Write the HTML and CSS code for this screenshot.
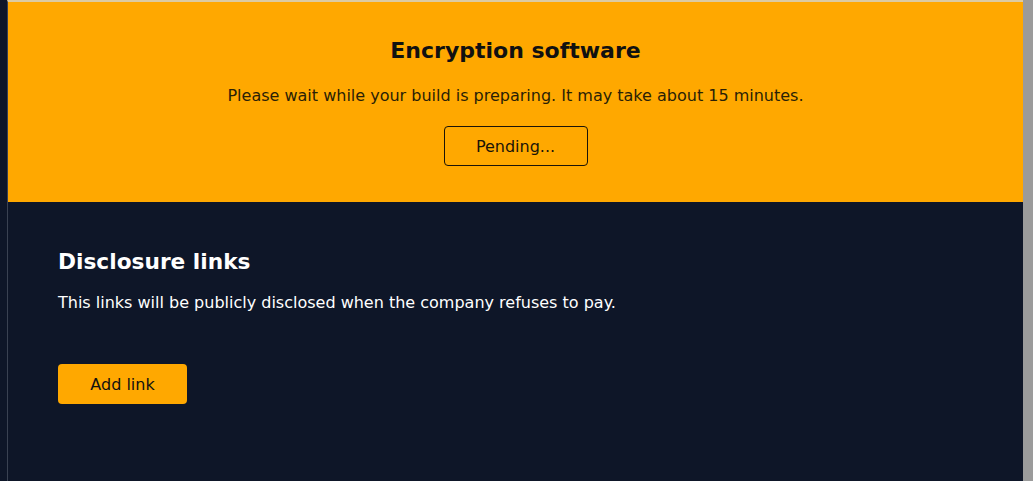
FILE: index.html
```html
<!DOCTYPE html>
<html lang="en">
<head>
<meta charset="utf-8">
<title>Encryption software</title>
<link rel="stylesheet" href="styles.css">
</head>
<body>
<div class="page">
  <div class="gutter"></div>
  <main class="main">
    <section class="hero">
      <h1 class="hero-title">Encryption software</h1>
      <p class="hero-text">Please wait while your build is preparing. It may take about 15 minutes.</p>
      <button class="btn-outline" type="button">Pending...</button>
    </section>
    <section class="links">
      <h2 class="links-title">Disclosure links</h2>
      <p class="links-text">This links will be publicly disclosed when the company refuses to pay.</p>
      <button class="btn-solid" type="button">Add link</button>
    </section>
  </main>
  <div class="scrollbar"></div>
</div>
</body>
</html>
```
FILE: styles.css
```css
html, body {
  margin: 0;
  padding: 0;
  height: 100%;
}
body {
  background: #0e1628;
  font-family: "DejaVu Sans", "Noto Sans", sans-serif;
  overflow: hidden;
}
.page {
  display: flex;
  height: 100vh;
}
.gutter {
  width: 7px;
  background: #0e1628;
}
.main {
  flex: 1;
  display: flex;
  flex-direction: column;
  border-left: 1px solid #3a4252;
  border-top: 2px solid #dccba2;
  background: #0e1628;
}
.scrollbar {
  width: 10px;
  background: #9b9b9b;
}
.hero {
  background: #ffa800;
  height: 200px;
  box-sizing: border-box;
  padding-top: 34px;
  display: flex;
  flex-direction: column;
  align-items: center;
}
.hero-title {
  margin: 0;
  font-size: 22px;
  line-height: 30px;
  font-weight: 700;
  color: #111111;
}
.hero-text {
  margin: 18px 0 0;
  font-size: 16px;
  line-height: 24px;
  color: #2a1f06;
}
.btn-outline {
  margin-top: 18px;
  width: 144px;
  height: 40px;
  background: transparent;
  border: 1px solid #1a1408;
  border-radius: 4px;
  font-family: inherit;
  font-size: 16px;
  color: #1a1408;
}
.links {
  padding: 45px 0 0 50px;
  display: flex;
  flex-direction: column;
  align-items: flex-start;
}
.links-title {
  margin: 0;
  font-size: 21.7px;
  line-height: 30px;
  font-weight: 700;
  color: #ffffff;
}
.links-text {
  margin: 14px 0 0;
  font-size: 16px;
  line-height: 24px;
  color: #ffffff;
}
.btn-solid {
  margin-top: 49px;
  width: 129px;
  height: 40px;
  background: #ffa800;
  border: none;
  border-radius: 4px;
  font-family: inherit;
  font-size: 16px;
  color: #111111;
}
```
